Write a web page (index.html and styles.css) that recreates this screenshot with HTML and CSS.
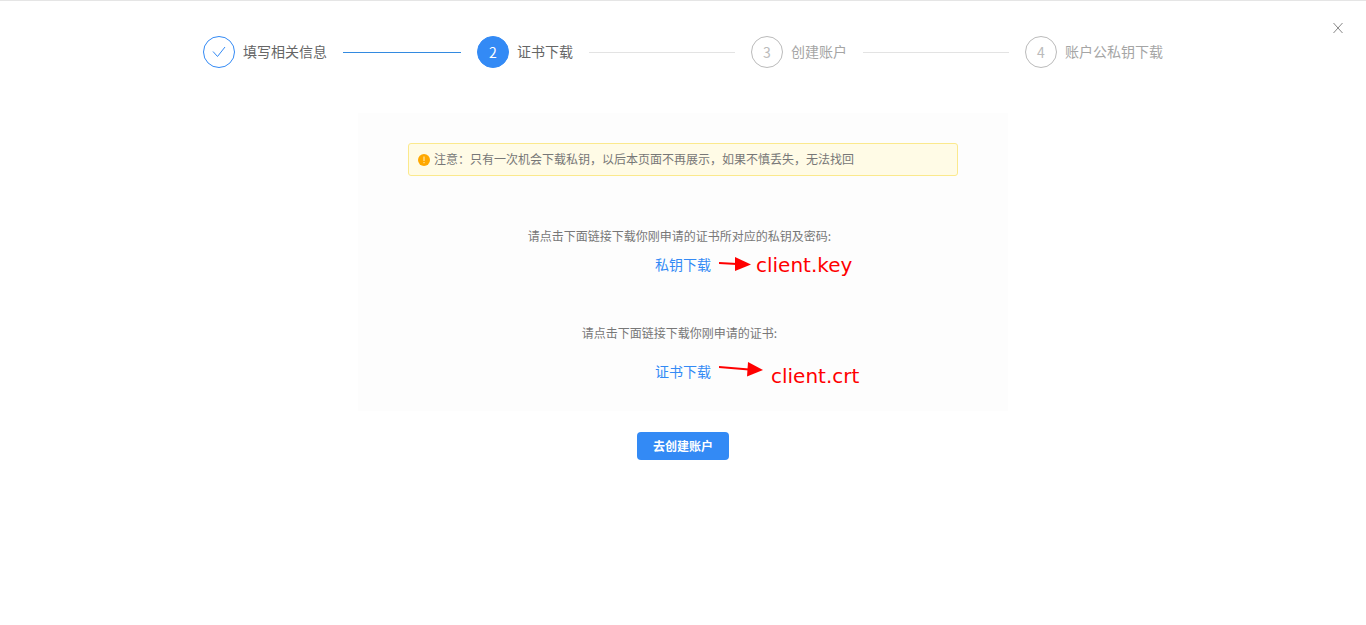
FILE: index.html
```html
<!DOCTYPE html>
<html lang="zh-CN">
<head>
	<meta charset="utf-8">
	<meta name="viewport" content="width=device-width, initial-scale=1">
	<title>证书下载</title>
	<link rel="stylesheet" href="styles.css">
</head>
<body>
	<button type="button" class="close" aria-label="关闭">
		<svg width="10" height="12" viewBox="0 0 10 12"><path d="M0.5 1 L9.5 11 M9.5 1 L0.5 11"/></svg>
	</button>

	<ol class="steps">
		<li class="step done">
			<span class="step-icon">
				<svg width="14" height="12" viewBox="0 0 14 12"><path d="M1 5.5 L5.5 10.5 L13 1"/></svg>
			</span>
			<span class="step-title">填写相关信息</span>
		</li>
		<li class="step active">
			<span class="step-icon">2</span>
			<span class="step-title">证书下载</span>
		</li>
		<li class="step">
			<span class="step-icon">3</span>
			<span class="step-title">创建账户</span>
		</li>
		<li class="step">
			<span class="step-icon">4</span>
			<span class="step-title">账户公私钥下载</span>
		</li>
	</ol>

	<main>
		<div class="panel">
			<div class="notice">
				<svg width="12" height="14" viewBox="0 0 12 14">
					<circle cx="6" cy="8" r="6" fill="#ffa800"/>
					<path d="M6 4.5 V9 M6 10 V11.2" stroke="#fff3c4" stroke-width="1"/>
				</svg>
				<span>注意：只有一次机会下载私钥，以后本页面不再展示，如果不慎丢失，无法找回</span>
			</div>

			<div class="download key">
				<p>请点击下面链接下载你刚申请的证书所对应的私钥及密码:</p>
				<div class="link-wrap">
					<a href="#key">私钥下载</a>
					<span class="mark">
						<svg width="32" height="16" viewBox="0 0 32 16">
							<path d="M0 7 L18 8" stroke="#f00" stroke-width="2"/>
							<path d="M16 1 L32 8.5 L16 15 Z" fill="#f00"/>
						</svg>
						<span>client.key</span>
					</span>
				</div>
			</div>

			<div class="download crt">
				<p>请点击下面链接下载你刚申请的证书:</p>
				<div class="link-wrap">
					<a href="#crt">证书下载</a>
					<span class="mark">
						<svg width="44" height="16" viewBox="0 0 44 16">
							<path d="M0 6 L30 8.5" stroke="#f00" stroke-width="2"/>
							<path d="M29 1 L44 9 L28 15.5 Z" fill="#f00"/>
						</svg>
						<span>client.crt</span>
					</span>
				</div>
			</div>
		</div>

		<button type="button" class="next">去创建账户</button>
	</main>
</body>
</html>
```

FILE: styles.css
```css
* {
	box-sizing: border-box;
}

body {
	margin: 0;
	border-top: 1px solid #e5e5e5;
	background: #fff;
	color: #777;
	font-family: "Noto Sans CJK SC", sans-serif;
	font-size: 12px;
	line-height: 20px;
}

.close {
	position: absolute;
	top: 18px;
	right: 18px;
	width: 20px;
	height: 20px;
	padding: 0;
	border: none;
	background: none;
	cursor: pointer;
}

.close svg {
	display: block;
	margin: auto;
	fill: none;
	stroke: #888;
}

/* steps */
.steps {
	display: flex;
	max-width: 960px;
	margin: 35px auto 45px;
	padding: 0;
	list-style: none;
	font-size: 14px;
}

.step {
	display: flex;
	flex: 1;
	align-items: center;
	margin-right: 16px;
	color: #a5a5a5;
	white-space: nowrap;
}

.step:last-child {
	flex: none;
	margin-right: 0;
}

.step::after {
	content: "";
	flex: 1;
	height: 1px;
	margin-left: 16px;
	background: #e3e3e3;
}

.step:last-child::after {
	display: none;
}

.step-icon {
	display: flex;
	align-items: center;
	justify-content: center;
	width: 32px;
	height: 32px;
	margin-right: 8px;
	border: 1px solid #bbb;
	border-radius: 50%;
	color: #bbb;
}

.step-title {
	padding-bottom: 2px;
}

.done,
.active {
	color: #666;
}

.done .step-icon {
	border-color: #338af5;
}

.done .step-icon svg {
	fill: none;
	stroke: #338af5;
}

.done::after {
	background: #338ae0;
}

.active .step-icon {
	border-color: #338af5;
	background: #338af5;
	color: #fff;
}

/* content */
main {
	display: flex;
	flex-direction: column;
	align-items: center;
}

.panel {
	width: 100%;
	max-width: 650px;
	padding: 30px 50px;
	background: #fdfdfd;
	text-align: center;
}

.notice {
	display: flex;
	align-items: center;
	gap: 4px;
	margin-bottom: 50px;
	padding: 5px 9px 6px;
	border: 1px solid #fbe98d;
	border-radius: 3px;
	background: #fffbe6;
	text-align: left;
}

.download p {
	margin: 0;
	padding-right: 7px;
}

.key {
	margin-bottom: 49px;
}

.key .link-wrap {
	margin-top: 8px;
}

.crt .link-wrap {
	margin-top: 18px;
}

.link-wrap {
	position: relative;
	display: inline-block;
	vertical-align: top;
	font-size: 14px;
}

a {
	color: #338af5;
	text-decoration: none;
}

/* red marks beside the links */
.mark {
	position: absolute;
	top: 0;
	left: 100%;
	display: flex;
	gap: 5px;
	margin-left: 8px;
	color: #f00;
	font-family: "DejaVu Sans", sans-serif;
	font-size: 20px;
	white-space: nowrap;
}

.crt .mark {
	gap: 8px;
}

.mark svg {
	flex: none;
	margin-top: 2px;
}

.crt .mark svg {
	margin-top: 0;
}

.mark span {
	margin-top: 1px;
}

.crt .mark span {
	margin-top: 5px;
}

.next {
	height: 28px;
	margin-top: 21px;
	padding: 0 16px 2px;
	border: none;
	border-radius: 4px;
	background: #338af5;
	color: #fff;
	font-family: inherit;
	font-size: 12px;
	font-weight: 700;
	cursor: pointer;
}
```
